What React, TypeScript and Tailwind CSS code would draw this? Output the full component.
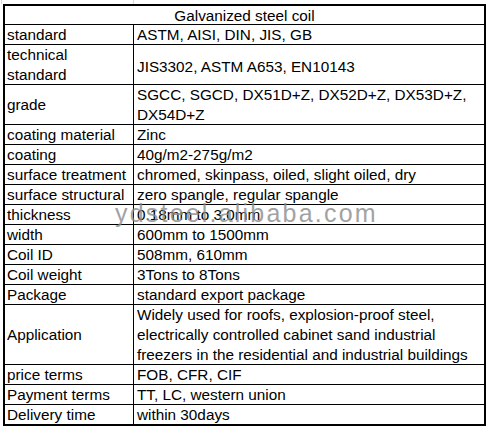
import type { ReactNode } from 'react'

const font = { fontFamily: '"Liberation Sans", Arial, sans-serif' }

interface RowProps {
  label: ReactNode
  children: ReactNode
  h?: string
  last?: boolean
  labelClass?: string
  valueClass?: string
  extra?: ReactNode
}

function Row({ label, children, h = 'h-[20px]', last, labelClass = '', valueClass = '', extra }: RowProps) {
  return (
    <div className={`relative flex ${h} ${last ? '' : 'border-b border-black'}`}>
      <div className={`flex w-[129px] shrink-0 border-r border-black pl-[2px] ${labelClass}`}>
        <div>{label}</div>
      </div>
      <div className={`flex flex-1 pl-[3px] ${valueClass}`}>
        <div>{children}</div>
      </div>
      {extra}
    </div>
  )
}

export default function App() {
  return (
    <div className="w-[488px] h-[429px] bg-white overflow-hidden text-black" style={font}>
      <div className="flex h-[4px]">
        <div className="w-[1px] ml-[1px] bg-[#d9d9d9]" />
        <div className="w-[1px] ml-[131px] bg-[#d9d9d9]" />
      </div>
      <div className="ml-[3px] w-[483px] border-2 border-black text-[15.3px] leading-[20px]">
        <div className="h-[19px] border-b border-black text-center">Galvanized steel coil</div>
        <Row label="standard">ASTM, AISI, DIN, JIS, GB</Row>
        <Row label={<>technical<br />standard</>} h="h-[40px]" valueClass="pt-[12px]">
          JIS3302, ASTM A653, EN10143
        </Row>
        <Row label="grade" h="h-[40px]" labelClass="items-center">
          SGCC, SGCD, DX51D+Z, DX52D+Z, DX53D+Z,
          <br />
          DX54D+Z
        </Row>
        <Row label="coating material">Zinc</Row>
        <Row label="coating">40g/m2-275g/m2</Row>
        <Row label="surface treatment">chromed, skinpass, oiled, slight oiled, dry</Row>
        <Row label="surface structural">zero spangle, regular spangle</Row>
        <Row
          label="thickness"
          extra={
            <div className="absolute left-[110px] top-[-4px] text-[25px] leading-[25px] tracking-[2.2px] text-[#8c8c8c] opacity-80 pointer-events-none">
              ydsteel.alibaba.com
            </div>
          }
        >
          0.18mm to 3.0mm
        </Row>
        <Row label="width">600mm to 1500mm</Row>
        <Row label="Coil ID">508mm, 610mm</Row>
        <Row label="Coil weight">3Tons to 8Tons</Row>
        <Row label="Package">standard export package</Row>
        <Row label="Application" h="h-[60px]" labelClass="items-center">
          Widely used for roofs, explosion-proof steel,
          <br />
          electrically controlled cabinet sand industrial
          <br />
          freezers in the residential and industrial buildings
        </Row>
        <Row label="price terms">FOB, CFR, CIF</Row>
        <Row label="Payment terms">TT, LC, western union</Row>
        <Row label="Delivery time" h="h-[19px]" last>
          within 30days
        </Row>
      </div>
    </div>
  )
}
